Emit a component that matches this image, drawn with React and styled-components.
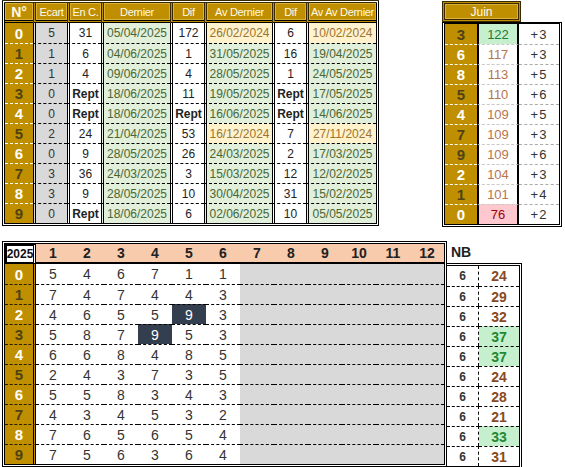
import React from "react";
import styled, { createGlobalStyle } from "styled-components";

const GlobalStyle = createGlobalStyle`
  body {
    margin: 0;
    background: #ffffff;
    font-family: "Liberation Sans", Arial, sans-serif;
  }
`;

const GOLD = "#bf8f00";
const GOLD_EDGE = "#3a2800";
const DARK_DIGIT = "#4f4214";

const Page = styled.div`
  width: 565px;
  height: 467px;
  padding: 0 0 0 2px;
  box-sizing: border-box;
  overflow: hidden;
`;

const TopRow = styled.div`
  display: flex;
  align-items: flex-start;
  gap: 63px;
`;

/* ---------- main history table ---------- */

const MainGrid = styled.div`
  display: grid;
  grid-template-columns: 28px 34px 34px 69px 34px 68px 34px 70px;
  grid-auto-rows: 20px;
  border: 3px double #000;
  border-top-color: ${GOLD_EDGE};
`;

const HeadCell = styled.div`
  box-sizing: border-box;
  background: ${GOLD};
  color: #fffbe8;
  font-size: ${(p) => (p.$strong ? "14px" : "11px")};
  font-weight: ${(p) => (p.$strong ? "bold" : "normal")};
  letter-spacing: ${(p) => (p.$strong ? "0" : "-0.3px")};
  display: flex;
  align-items: center;
  justify-content: center;
  white-space: nowrap;
  overflow: hidden;
  border-bottom: 3px double #000;
  border-left: ${(p) => (p.$first ? "none" : `3px double ${GOLD_EDGE}`)};
  box-shadow: inset 0 0 0 1px #d9b23c;
`;

const DigitCell = styled.div`
  box-sizing: border-box;
  background: ${GOLD};
  color: ${(p) => (p.$n % 2 === 0 ? "#ffffff" : DARK_DIGIT)};
  font-size: 15px;
  font-weight: bold;
  display: flex;
  align-items: center;
  justify-content: center;
  border-top: ${(p) => (p.$top ? "none" : `1px dashed ${p.$line || "#fff"}`)};
`;

const tones = {
  grey: { bg: "#d9d9d9", fg: "#333333" },
  plain: { bg: "#ffffff", fg: "#222222" },
  green: { bg: "#e2efda", fg: "#486636" },
  warm: { bg: "#fff2cc", fg: "#9a7430" },
};

const DataCell = styled.div`
  box-sizing: border-box;
  background: ${(p) => tones[p.$tone].bg};
  color: ${(p) => tones[p.$tone].fg};
  font-size: 12px;
  font-weight: ${(p) => (p.$bold ? "bold" : "normal")};
  display: flex;
  align-items: center;
  justify-content: center;
  border-left: 3px double #000;
  border-top: ${(p) => (p.$top ? "none" : "1px dashed #000")};
`;

const history = [
  [0, "5", "31", "05/04/2025", "172", "26/02/2024", true, "6", "10/02/2024", true],
  [1, "1", "6", "04/06/2025", "1", "31/05/2025", false, "16", "19/04/2025", false],
  [2, "1", "4", "09/06/2025", "4", "28/05/2025", false, "1", "24/05/2025", false],
  [3, "0", "Rept", "18/06/2025", "11", "19/05/2025", false, "Rept", "17/05/2025", false],
  [4, "0", "Rept", "18/06/2025", "Rept", "16/06/2025", false, "Rept", "14/06/2025", false],
  [5, "2", "24", "21/04/2025", "53", "16/12/2024", true, "7", "27/11/2024", true],
  [6, "0", "9", "28/05/2025", "26", "24/03/2025", false, "2", "17/03/2025", false],
  [7, "3", "36", "24/03/2025", "3", "15/03/2025", false, "12", "12/02/2025", false],
  [8, "3", "9", "28/05/2025", "10", "30/04/2025", false, "31", "15/02/2025", false],
  [9, "0", "Rept", "18/06/2025", "6", "02/06/2025", false, "10", "05/05/2025", false],
];

const heads = ["Ecart", "En C.", "Dernier", "Dif", "Av Dernier", "Dif", "Av Av Dernier"];

function HistoryTable() {
  return (
    <MainGrid>
      <HeadCell $first $strong>N°</HeadCell>
      {heads.map((h, i) => (
        <HeadCell key={i}>{h}</HeadCell>
      ))}
      {history.map((r, i) => {
        const top = i === 0;
        const isRept = (v) => v === "Rept";
        return (
          <React.Fragment key={r[0]}>
            <DigitCell $n={r[0]} $top={top}>{r[0]}</DigitCell>
            <DataCell $tone="grey" $top={top}>{r[1]}</DataCell>
            <DataCell $tone="plain" $top={top} $bold={isRept(r[2])}>{r[2]}</DataCell>
            <DataCell $tone="green" $top={top}>{r[3]}</DataCell>
            <DataCell $tone="plain" $top={top} $bold={isRept(r[4])}>{r[4]}</DataCell>
            <DataCell $tone={r[6] ? "warm" : "green"} $top={top}>{r[5]}</DataCell>
            <DataCell $tone="plain" $top={top} $bold={isRept(r[7])}>{r[7]}</DataCell>
            <DataCell $tone={r[9] ? "warm" : "green"} $top={top}>{r[8]}</DataCell>
          </React.Fragment>
        );
      })}
    </MainGrid>
  );
}

/* ---------- month ranking ---------- */

const MonthWrap = styled.div`
  display: flex;
  flex-direction: column;
  padding-top: 1px;
`;

const MonthHead = styled.div`
  box-sizing: border-box;
  width: 79px;
  height: 21px;
  background: ${GOLD};
  color: #fffbe8;
  font-size: 12px;
  display: flex;
  align-items: center;
  justify-content: center;
  border: 3px double ${GOLD_EDGE};
  box-shadow: inset 0 0 0 1px #d9b23c;
`;

const MonthGrid = styled.div`
  display: grid;
  grid-template-columns: 32px 42px 40px;
  grid-auto-rows: 20px;
  border: 3px double #000;
  border-top: 2px solid #000;
`;

const countTones = {
  good: { bg: "#c6efce", fg: "#1e7b34" },
  bad: { bg: "#ffc7ce", fg: "#9c0006" },
  none: { bg: "#ffffff", fg: "#b8744c" },
};

const CountCell = styled.div`
  box-sizing: border-box;
  background: ${(p) => countTones[p.$state].bg};
  color: ${(p) => countTones[p.$state].fg};
  font-size: 13px;
  display: flex;
  align-items: center;
  justify-content: center;
  border-left: 2px solid #000;
  border-right: 2px solid #000;
  border-top: ${(p) => (p.$top ? "none" : "1px dashed #c8c8c8")};
`;

const GainCell = styled.div`
  box-sizing: border-box;
  color: #333;
  font-size: 13px;
  letter-spacing: 1px;
  display: flex;
  align-items: center;
  justify-content: center;
  border-top: ${(p) => (p.$top ? "none" : "1px dashed #aaa")};
`;

const month = [
  [3, 122, "+3", "good"],
  [6, 117, "+3", "none"],
  [8, 113, "+5", "none"],
  [5, 110, "+6", "none"],
  [4, 109, "+5", "none"],
  [7, 109, "+3", "none"],
  [9, 109, "+6", "none"],
  [2, 104, "+3", "none"],
  [1, 101, "+4", "none"],
  [0, 76, "+2", "bad"],
];

function MonthTable() {
  return (
    <MonthWrap>
      <MonthHead>Juin</MonthHead>
      <MonthGrid>
        {month.map((m, i) => (
          <React.Fragment key={m[0]}>
            <DigitCell $n={m[0]} $top={i === 0}>{m[0]}</DigitCell>
            <CountCell $state={m[3]} $top={i === 0}>{m[1]}</CountCell>
            <GainCell $top={i === 0}>{m[2]}</GainCell>
          </React.Fragment>
        ))}
      </MonthGrid>
    </MonthWrap>
  );
}

/* ---------- yearly grid ---------- */

const BottomRow = styled.div`
  display: flex;
  align-items: flex-start;
  margin-top: 14px;
`;

const YearGrid = styled.div`
  display: grid;
  grid-template-columns: 31px repeat(12, 34px);
  grid-template-rows: 20px;
  grid-auto-rows: 20px;
  border: 3px double #000;
`;

const YearLabel = styled.div`
  box-sizing: border-box;
  background: #fff;
  border: 2px solid #000;
  border-right: 3px double #000;
  font-size: 12px;
  font-weight: bold;
  color: #111;
  display: flex;
  align-items: center;
  justify-content: center;
`;

const MonthNum = styled.div`
  box-sizing: border-box;
  background: #f8cbad;
  border-bottom: 2px solid #000;
  font-size: 14px;
  font-weight: bold;
  color: #222;
  display: flex;
  align-items: center;
  justify-content: center;
`;

const RowDigit = styled(DigitCell)`
  border-right: 3px double #000;
`;

const DrawCell = styled.div`
  box-sizing: border-box;
  background: ${(p) => (p.$hit ? "#333f4f" : p.$empty ? "#d9d9d9" : "#fff")};
  color: ${(p) => (p.$hit ? "#fff" : "#333")};
  font-size: 14px;
  display: flex;
  align-items: center;
  justify-content: center;
  border-top: ${(p) => (p.$top ? "none" : "1px dashed #000")};
`;

const TotalWrap = styled.div`
  display: flex;
  flex-direction: column;
`;

const TotalHead = styled.div`
  height: 22px;
  padding-left: 4px;
  font-size: 14px;
  font-weight: bold;
  color: #222;
  display: flex;
  align-items: center;
`;

const TotalGrid = styled.div`
  display: grid;
  grid-template-columns: 32px 40px;
  grid-auto-rows: 20px;
  border: 3px double #000;
  border-left: none;
`;

const NbCell = styled.div`
  box-sizing: border-box;
  font-size: 12px;
  font-weight: bold;
  color: #333;
  display: flex;
  align-items: center;
  justify-content: center;
  border-right: 1px dashed #000;
  border-top: ${(p) => (p.$top ? "none" : "1px dashed #000")};
`;

const SumCell = styled.div`
  box-sizing: border-box;
  background: ${(p) => (p.$high ? "#c6efce" : "#fff")};
  color: ${(p) => (p.$high ? "#1e8a34" : "#8a4a1e")};
  font-size: 14px;
  font-weight: bold;
  display: flex;
  align-items: center;
  justify-content: center;
  border-top: ${(p) => (p.$top ? "none" : "1px dashed #000")};
`;

const draws = [
  [5, 4, 6, 7, 1, 1],
  [7, 4, 7, 4, 4, 3],
  [4, 6, 5, 5, 9, 3],
  [5, 8, 7, 9, 5, 3],
  [6, 6, 8, 4, 8, 5],
  [2, 4, 3, 7, 3, 5],
  [5, 5, 8, 3, 4, 3],
  [4, 3, 4, 5, 3, 2],
  [7, 6, 5, 6, 5, 4],
  [7, 5, 6, 3, 6, 4],
];

const sums = [24, 29, 32, 37, 37, 24, 28, 21, 33, 31];
const highs = [3, 4, 8];
const hits = { "2-4": true, "3-3": true };

function YearTable() {
  return (
    <BottomRow>
      <YearGrid>
        <YearLabel>2025</YearLabel>
        {Array.from({ length: 12 }, (_, i) => (
          <MonthNum key={i}>{i + 1}</MonthNum>
        ))}
        {draws.map((row, r) => (
          <React.Fragment key={r}>
            <RowDigit $n={r} $top={r === 0} $line="#2a1e00">{r}</RowDigit>
            {Array.from({ length: 12 }, (_, c) => (
              <DrawCell
                key={c}
                $top={r === 0}
                $empty={c >= 6}
                $hit={hits[`${r}-${c}`]}
              >
                {c < 6 ? row[c] : ""}
              </DrawCell>
            ))}
          </React.Fragment>
        ))}
      </YearGrid>
      <TotalWrap>
        <TotalHead>NB</TotalHead>
        <TotalGrid>
          {sums.map((s, r) => (
            <React.Fragment key={r}>
              <NbCell $top={r === 0}>6</NbCell>
              <SumCell $top={r === 0} $high={highs.includes(r)}>{s}</SumCell>
            </React.Fragment>
          ))}
        </TotalGrid>
      </TotalWrap>
    </BottomRow>
  );
}

export default function App() {
  return (
    <Page>
      <GlobalStyle />
      <TopRow>
        <HistoryTable />
        <MonthTable />
      </TopRow>
      <YearTable />
    </Page>
  );
}
